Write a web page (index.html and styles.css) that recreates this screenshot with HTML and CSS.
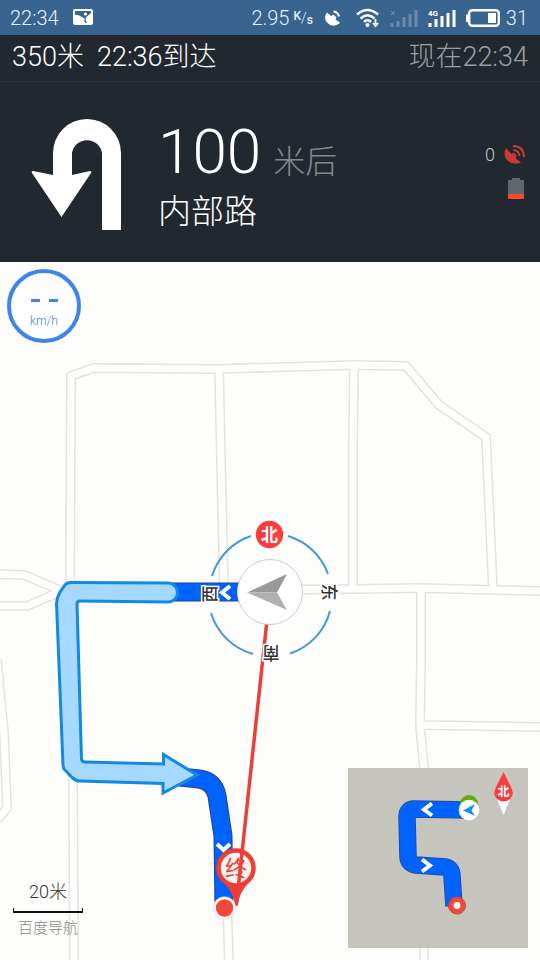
FILE: index.html
```
<!DOCTYPE html>
<html lang="zh-CN">
<head>
<meta charset="utf-8">
<meta name="viewport" content="width=device-width, initial-scale=1">
<title>百度导航</title>
<link rel="stylesheet" href="styles.css">
</head>
<body>
<div class="status">
  <time>22:34</time>
  <svg class="status-photo" width="20" height="17" viewBox="0 0 20 17"><rect width="20" height="16" rx="2" fill="#fff"/><path d="M2 6Q5 5 8 7.500Q12 9 14 14H12.500L10.500 11.500L13 11Q12 8 14 7.500L18 4V2H2Z" fill="#38648f"/><circle cx="12.500" cy="5" r="1.600" fill="#fff"/></svg>
  <span class="speed">2.95</span>
  <span class="unit"><sup>K</sup>/<sub>s</sub></span>
  <svg class="status-dish" width="18" height="18" viewBox="0 0 18 18"><path d="M3 3.500Q-1 9 3 13.500Q8 19 14.500 15L16 13.500L11.500 10.500L12.500 8.500L9.500 5.500L7 7Z" fill="#fff"/><path d="M9.500 2.500Q14 3 15 7.500" fill="none" stroke="#fff" stroke-width="2"/></svg>
  <svg class="status-wifi" width="24" height="20" viewBox="0 0 24 20"><g fill="none" stroke="#fff" stroke-width="2.500"><path d="M1 6.500Q11.500-2.500 22 6.500"/><path d="M4.500 10.500Q11.500 4 18.500 10.500"/><path d="M8 14Q11.500 10.500 15 14"/></g><circle cx="11.500" cy="17" r="2" fill="#fff"/><path d="M19.500 11V17M17 15L19.500 18L22 15" fill="none" stroke="#fff" stroke-width="1.800"/></svg>
  <svg class="status-bars dim" width="28" height="18" viewBox="0 0 28 18"><path d="M2 18V14M8 18V12M14 18V8M20 18V5M26 18V1" stroke="#fff" stroke-width="3"/><path d="M1 2L5 6M5 2L1 6" stroke="#fff"/></svg>
  <svg class="status-bars" width="28" height="18" viewBox="0 0 28 18"><path d="M2 18V14M8 18V10M14 18V7M20 18V4M26 18V1" stroke="#fff" stroke-width="3"/><text x="0" y="7" class="network">4G</text></svg>
  <svg class="status-battery" width="34" height="18" viewBox="0 0 34 18"><rect x="3.200" y="1.200" width="29.600" height="15.600" rx="3" fill="none" stroke="#fff" stroke-width="2.400"/><path d="M2 5V13H0V6ZM22 4H30V14H22Z" fill="#fff"/></svg>
  <span>31</span>
</div>
<header class="guide">
  <div class="summary">
    <span>350米</span><span>22:36到达</span><span class="now">现在22:34</span>
  </div>
  <div class="maneuver">
    <svg class="turn" width="90" height="111" viewBox="0 0 90 111" role="img" aria-label="掉头"><path d="M22 56V34A34 34 0 0 1 90 34V111H71V34A15.200 15.200 0 0 0 41 34V56L59 52Q61 52 60 54L30.500 98L1 54Q0 52 2 52Z" fill="#fff"/></svg>
    <div class="instruction">
      <p class="distance"><strong>100</strong><span>米后</span></p>
      <h1>内部路</h1>
    </div>
    <div class="device">
      <div class="satellites"><span>0</span>
        <svg width="22" height="22" viewBox="0 0 22 22"><path d="M2 4Q-1.500 11 3 16Q9 22 17 18.500L11.500 14L13 11.500L9.500 8.500L7.500 10Z" fill="#c63b34"/><g fill="none" stroke="#c63b34"><path d="M9.500 6Q15 6.500 15.500 12" stroke-width="2"/><path d="M9 2Q19.500 2 20 13" stroke-width="2.200"/></g></svg>
      </div>
      <svg class="power" width="16" height="21" viewBox="0 0 16 21"><path d="M0 3Q0 2 1 2H4V0H12V2H15Q16 2 16 3V16H0Z" fill="#63676c"/><path d="M0 16H16V20Q16 21 15 21H1Q0 21 0 20Z" fill="#f04a38"/></svg>
    </div>
  </div>
</header>
<main class="map">
  <svg class="canvas" viewBox="0 262 540 698" preserveAspectRatio="xMidYMin slice">
    <defs>
      <g id="roads">
        <path d="M70 592L71 376L93 368L217 369L354 365L406 366L439 405L486 437L493 590"/>
        <path d="M219 368L221 460L224 592M354 365L353 450L353 590M269 590L354 589L421 588L493 590L545 591M421 588L421 660L420 725L424 768L424 965M420 725L545 727"/>
        <path d="M-5 574L24 575L62 591L27 606L-5 606M-3 660L4 733L7 808L-3 820M73 770L74 965M227 900L229 965"/>
      </g>
    </defs>
    <use href="#roads" class="road-edge"/>
    <use href="#roads" class="road"/>
    <g class="route-edge"><path d="M170 592H269M180 777L199 779Q214 781 217 796L223 836L224 908"/></g>
    <g class="route"><path d="M170 592H269M180 777L199 779Q214 781 217 796L223 836L224 908"/></g>
    <path class="step" d="M168 583A9.500 9.500 0 0 1 168 602L80 601Q77 601 77 604L81.500 759Q82 762 85 762L163.500 764V754.500L197 775L163 793V783.500L80 781Q76 781 72 777.500L64 769Q63 767 63 765L56.500 603Q57 597 60 592L65 585Q67 582.500 71 582.500Z"/>
    <g class="chevron"><path d="M230 586L222 592.500L230 599M217 844L223.500 850L230 844"/></g>
    <circle cx="236" cy="868" r="17.500" fill="#fbf4ee" stroke="#f23c32" stroke-width="4.500"/>
    <path d="M223 882Q236 890 249 882Q239 893 237.500 906H235Q234 893 223 882Z" fill="#f23c32"/>
    <text class="end" x="236" y="876">终</text>
    <path d="M267 620L236.500 904" stroke="#e8413a" stroke-width="3.500"/>
    <circle cx="224.500" cy="908" r="11.500" fill="#e8dfda"/><circle cx="224.500" cy="908" r="10.700" fill="#fff"/><circle cx="224.500" cy="908" r="8.700" fill="#f4483c"/>
    <g class="ring"><path d="M251 536A61 61 0 0 0 212 576M288 536A61 61 0 0 1 328 574M211 613A61 61 0 0 0 253 654M330 611A61 61 0 0 1 290 653.500"/></g>
    <circle cx="270" cy="592" r="32.500" fill="#fff" stroke="#ccc"/>
    <path d="M247 592.500L287 574L277 592.500Z" fill="#999"/><path d="M247 592.500L287 610L277 592.500Z" fill="#b0b0b0"/>
    <circle cx="269.500" cy="534.500" r="13.700" fill="#fb3d42"/>
    <text class="north" x="269.500" y="540.500">北</text>
    <text class="point" transform="translate(210 594) rotate(-90)" y="6">西</text>
    <text class="point" transform="translate(329 592) rotate(90)" y="6">东</text>
    <text class="point" transform="translate(271 653) rotate(180)" y="6">南</text>
  </svg>
  <div class="speedometer"><span class="dashes"><i></i><i></i></span><span>km/h</span></div>
  <div class="scale"><span>20米</span><i></i><small>百度导航</small></div>
  <svg class="overview" viewBox="0 0 180 180" role="img" aria-label="路线全览">
    <path d="M121 42L66 41Q59 41 59 49L60 88Q60 96 68 97L97 99Q104 100 104 108L106 138" fill="none" stroke="#2a4a86" stroke-width="17.500"/>
    <path d="M121 42L66 41Q59 41 59 49L60 88Q60 96 68 97L97 99Q104 100 104 108L106 138" fill="none" stroke="#0062ff" stroke-width="16"/>
    <g class="chevron"><path d="M84 35.500L76 41.500L84 47.500M74 91.500L82 97.500L74 103.500"/></g>
    <circle cx="121" cy="36" r="9" fill="#63a80f"/><circle cx="121" cy="42" r="10.300" fill="#fff"/><path d="M115 42.500L127 36L123.500 42.500L127 48Z" fill="#1590f2"/>
    <circle cx="109" cy="137.500" r="8.500" fill="#f4483c" stroke="#d83a30"/><circle cx="109" cy="137.500" r="3.400" fill="#fff"/>
    <path d="M149 31L155.500 47L162 31Z" fill="#fff"/><path d="M155.500 4L163 19Q167 27 162 31Q155.500 36 149 31Q144 27 148 19Z" fill="#fb3d42"/>
    <text class="north-small" x="155.500" y="28">北</text>
  </svg>
</main>
</body>
</html>
```

FILE: styles.css
```
* { box-sizing: border-box; }
body {
  margin: 0;
  min-height: 100vh;
  display: flex;
  flex-direction: column;
  font-family: Roboto, "Noto Sans CJK SC", sans-serif;
  font-weight: 300;
  background: #fdfdfb;
}
p, h1 { margin: 0; font-weight: 300; }
svg { display: block; flex: none; }

.status {
  display: flex;
  align-items: center;
  height: 35px;
  padding: 0 12px 0 10px;
  background: #38648f;
  color: #e6f2fb;
  font-size: 20px;
}
.status-photo { margin-left: 14px; }
.speed { margin-left: auto; }
.unit { display: flex; margin-left: 4px; font-size: 14px; line-height: 16px; }
.unit sup, .unit sub { font-size: 12px; font-weight: 500; line-height: 12px; }
.unit sup { align-self: flex-start; }
.unit sub { align-self: flex-end; }
.status-dish { margin-left: 11px; }
.status-wifi { margin-left: 14px; }
.status-bars { margin-left: 10px; }
.dim { opacity: 0.25; }
.status-battery { margin: 0 6px 0 10px; }
.network { font-size: 8px; font-weight: 700; fill: #fff; }

.guide { background: #22282f; color: #fff; }
.summary {
  display: flex;
  gap: 13px;
  height: 47px;
  padding: 0 12px 2px;
  align-items: center;
  border-bottom: 1px solid #2b3239;
  font-size: 27px;
  line-height: 40px;
}
.now { margin-left: auto; color: #9b9ea2; }
.maneuver { display: flex; height: 180px; padding: 0 14px 0 31px; }
.turn { margin-top: 37px; }
.instruction { flex: 1; padding: 36px 0 0 37px; }
.distance { display: flex; align-items: baseline; gap: 12px; line-height: 68px; }
.distance strong { font-size: 62px; font-weight: 300; }
.distance span { font-size: 32px; color: #85888d; }
.instruction h1 { font-size: 33px; line-height: 32px; }
.device { padding-top: 62px; display: flex; flex-direction: column; gap: 12px; align-items: flex-end; }
.satellites { display: flex; align-items: center; gap: 9px; font-size: 18px; line-height: 22px; color: #c4c6c9; }
.power { margin-right: 2px; }

.map { position: relative; flex: 1; min-height: 600px; overflow: hidden; }
.canvas { position: absolute; inset: 0; width: 100%; height: 100%; }
.road-edge { fill: none; stroke: #e3e3e0; stroke-width: 10px; }
.road { fill: none; stroke: #fefefd; stroke-width: 7px; }
.route-edge { fill: none; stroke: #25408c; stroke-width: 19px; }
.route { fill: none; stroke: #0062ff; stroke-width: 17px; }
.step { fill: #a6d9ff; stroke: #1389e0; stroke-width: 3px; }
.chevron { fill: none; stroke: #fff; stroke-width: 4px; }
.ring { fill: none; stroke: #4199da; stroke-width: 2px; }
.end { font-size: 22px; font-weight: 400; fill: #e8413a; text-anchor: middle; }
.north { font-size: 17px; font-weight: 700; fill: #fff; text-anchor: middle; }
.north-small { font-size: 12px; font-weight: 700; fill: #fff; text-anchor: middle; }
.point {
  font-size: 17px;
  font-weight: 500;
  fill: #333;
  stroke: #fff;
  stroke-width: 3px;
  paint-order: stroke;
  text-anchor: middle;
}

.speedometer {
  position: absolute;
  left: 7px;
  top: 7px;
  width: 74px;
  height: 74px;
  display: flex;
  flex-direction: column;
  align-items: center;
  justify-content: center;
  gap: 12px;
  padding-top: 14px;
  border: 4px solid #3f85e8;
  border-radius: 50%;
  background: #fff;
  color: #3c7fc4;
  font-size: 12px;
  line-height: 14px;
  font-weight: 300;
}
.dashes { display: flex; gap: 9px; }
.dashes i { width: 9px; height: 3px; background: #3f85e8; }

.scale {
  position: absolute;
  left: 13px;
  bottom: 21px;
  width: 70px;
  display: flex;
  flex-direction: column;
  align-items: center;
  color: #333;
  font-size: 18px;
  line-height: 24px;
}
.scale i { width: 100%; height: 5px; margin: 4px 0; border: solid #111; border-width: 0 1px 2px; }
.scale small { font-size: 15px; line-height: 22px; color: #888; }

.overview { position: absolute; right: 12px; bottom: 12px; width: 180px; height: 180px; background: #c6c5bd; }
```
